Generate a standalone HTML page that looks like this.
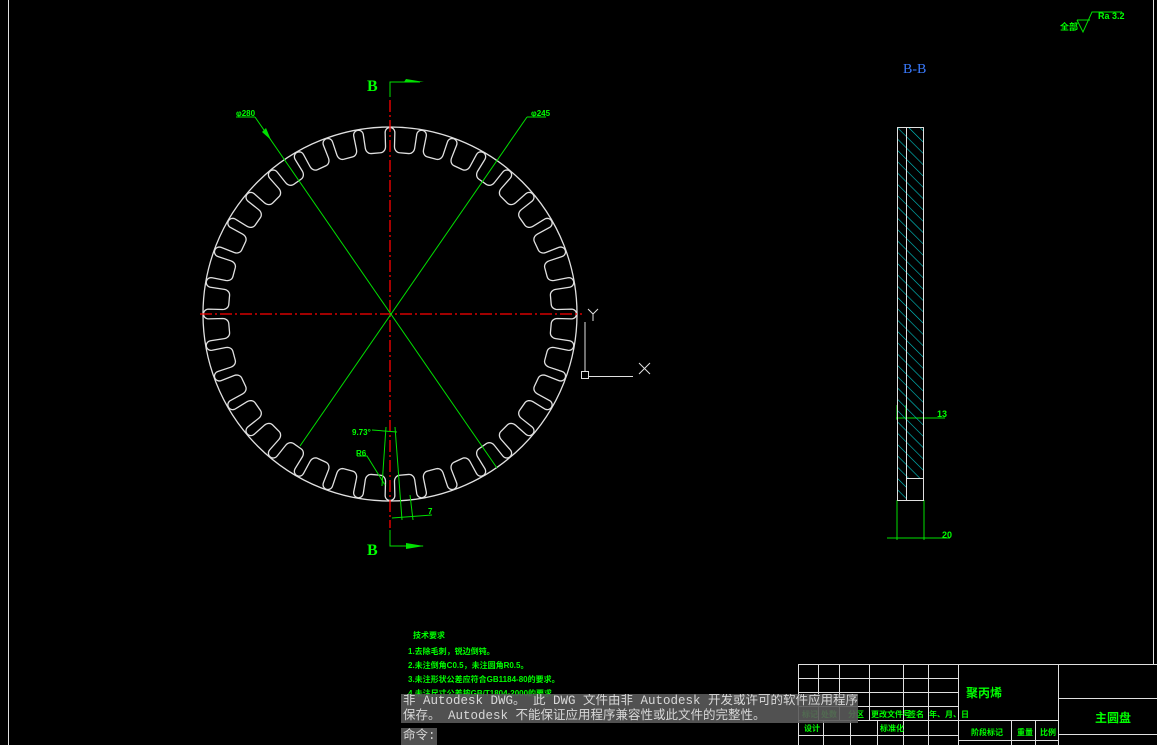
<!DOCTYPE html>
<html><head><meta charset="utf-8"><style>
html,body{margin:0;padding:0;background:#000;width:1157px;height:745px;overflow:hidden}
svg{position:absolute;left:0;top:0}
.g{fill:#00ff00;font-family:"Liberation Sans","Noto Sans CJK SC",sans-serif;font-weight:bold}
.ov{position:absolute;background:rgba(90,90,90,0.9);color:#d8d8d8;font-family:"Liberation Mono","Noto Sans CJK SC",monospace;font-size:12.5px;line-height:14.5px;white-space:nowrap;overflow:hidden}
</style></head><body>
<svg width="1157" height="745" viewBox="0 0 1157 745">
<g stroke="#e0e0e0" stroke-width="1" fill="none">
<line x1="8.5" y1="0" x2="8.5" y2="745"/>
<line x1="1153.5" y1="0" x2="1153.5" y2="664"/>
<circle cx="390" cy="314" r="187" stroke-width="1.3"/>
<path id="gear" stroke-width="1.3"/>
</g>
<g stroke="#ff0000" stroke-width="1.3" stroke-dasharray="12,3,2,3">
<line x1="200" y1="314" x2="582" y2="314"/>
<line x1="390" y1="100" x2="390" y2="528"/>
</g>
<g stroke="#00e000" stroke-width="1" fill="none">
<line x1="236" y1="117" x2="255" y2="117"/><line x1="255" y1="117" x2="497" y2="468"/>
<line x1="527" y1="117" x2="546" y2="117"/><line x1="527" y1="117" x2="300" y2="446"/>
<polyline points="390,97 390,82 420,82"/>
<polyline points="390,530 390,546 423,546"/>
<line x1="372" y1="430" x2="397" y2="432"/>
<line x1="386" y1="427" x2="382" y2="486"/>
<line x1="395" y1="427" x2="402" y2="520"/>
<line x1="410" y1="495" x2="413" y2="520"/>
<line x1="392" y1="518" x2="432" y2="515"/>
<polyline points="357,456 367,456 385,485"/>
<line x1="896" y1="418" x2="945" y2="418"/>
<line x1="897" y1="405" x2="897" y2="420"/><line x1="906" y1="405" x2="906" y2="420"/>
<line x1="897" y1="500" x2="897" y2="540"/><line x1="924" y1="500" x2="924" y2="540"/>
<line x1="887" y1="538" x2="950" y2="538"/>
<polyline points="1077,20 1083,32 1092,12 1122,12"/>
<line x1="1077" y1="20" x2="1090" y2="20"/>
</g>
<g fill="#00e000">
<polygon points="404,82 424,82 406,79"/>
<polygon points="406,543 424,546 406,549"/>
<polygon points="266,128 271,140 262,132"/>
</g>
<defs><pattern id="h" patternUnits="userSpaceOnUse" width="8" height="8" patternTransform="rotate(-45)"><line x1="0" y1="0" x2="0" y2="8" stroke="#00c8c8" stroke-width="1.2"/></pattern></defs>
<rect x="897" y="127" width="9" height="373" fill="url(#h)"/>
<rect x="906" y="127" width="18" height="351" fill="url(#h)"/>
<g stroke="#e0e0e0" fill="none" stroke-width="1">
<rect x="897.5" y="127.5" width="26" height="373"/>
<line x1="906.5" y1="127" x2="906.5" y2="500"/>
<line x1="906" y1="478.5" x2="924" y2="478.5"/>
</g>
<g stroke="#e0e0e0" fill="none" stroke-width="1">
<rect x="581.5" y="371.5" width="7" height="7"/>
<line x1="585" y1="322" x2="585" y2="372"/><line x1="588" y1="376.5" x2="633" y2="376.5"/>
<path d="M588 309 L593 314 L598 309 M593 314 L593 321"/>
<path d="M639 363 L650 374 M650 363 L639 374"/>
</g>
<g stroke="#e0e0e0" stroke-width="1" fill="none">
<path d="M798.5 664 V745 M818.5 664 V720 M839.5 664 V720 M869.5 664 V720 M903.5 664 V745 M928.5 664 V745 M958.5 664 V745 M1058.5 664 V745"/>
<path d="M798 664.5 H1157 M798 678.5 H958 M798 692.5 H958 M798 706.5 H958 M798 720.5 H1058 M798 735.5 H958 M1058 698.5 H1157 M1058 734.5 H1157 M1011.5 720 V745 M1035.5 720 V745 M823.5 720 V745 M850.5 720 V745 M877.5 720 V745 M958 740.5 H1058"/>
</g>
<g class="g">
<text x="367" y="91" font-size="16" font-family="Liberation Serif">B</text>
<text x="367" y="555" font-size="16" font-family="Liberation Serif">B</text>
<text x="236" y="116" font-size="8">φ280</text>
<text x="531" y="116" font-size="8">φ245</text>
<text x="352" y="435" font-size="8">9.73°</text>
<text x="356" y="456" font-size="8">R6</text>
<text x="428" y="514" font-size="8">7</text>
<text x="937" y="417" font-size="9">13</text>
<text x="942" y="538" font-size="9">20</text>
<text x="1060" y="30" font-size="9">全部</text>
<text x="1098" y="19" font-size="9">Ra 3.2</text>
<text x="413" y="638" font-size="8">技术要求</text>
<text x="408" y="654" font-size="8">1.去除毛刺，锐边倒钝。</text>
<text x="408" y="668" font-size="8">2.未注倒角C0.5，未注圆角R0.5。</text>
<text x="408" y="682" font-size="8">3.未注形状公差应符合GB1184-80的要求。</text>
<text x="408" y="696" font-size="8">4.未注尺寸公差按GB/T1804-2000的要求。</text>
<text x="966" y="697" font-size="12">聚丙烯</text>
<text x="1095" y="722" font-size="12">主圆盘</text>
<text x="802" y="717" font-size="8">标记</text><text x="821" y="717" font-size="8">处数</text>
<text x="848" y="717" font-size="8">分区</text><text x="871" y="717" font-size="8">更改文件号</text>
<text x="908" y="717" font-size="8">签名</text><text x="929" y="717" font-size="8">年、月、日</text>
<text x="804" y="731" font-size="8">设计</text><text x="880" y="731" font-size="8">标准化</text>
<text x="971" y="735" font-size="8">阶段标记</text><text x="1017" y="735" font-size="8">重量</text><text x="1040" y="735" font-size="8">比例</text>
</g>
<text x="903" y="73" font-size="14" fill="#3a7bff" font-family="Liberation Serif">B-B</text>
</svg>
<div class="ov" style="left:401px;top:694px;width:455px;height:29px;padding-left:2px">非 Autodesk DWG。 此 DWG 文件由非 Autodesk 开发或许可的软件应用程序<br>保存。 Autodesk 不能保证应用程序兼容性或此文件的完整性。</div>
<div class="ov" style="left:401px;top:728px;width:34px;height:17px;padding-left:2px;line-height:17px">命令:</div>
<script>
(function(){
var cx=390,cy=314,R=187,N=36,P=2*Math.PI*R/N,D=25,rc=5,rb=6;
function arc(pts,c0,c1,r,t0,t1){for(var k=0;k<=6;k++){var t=t0+(t1-t0)*k/6;pts.push([c0+r*Math.cos(t),c1+r*Math.sin(t)]);}}
// local profile: s tangent, h inward
var loc=[];var h2=P/2;
arc(loc,-h2,rc,rc,-Math.PI/2,0);            // cusp right half: from (-h2,0) to (-h2+rc,rc)
loc.push([-h2+rc,D-rb]);
arc(loc,-h2+rc+rb,D-rb,rb,Math.PI,Math.PI/2);
loc.push([h2-rc-rb,D]);
arc(loc,h2-rc-rb,D-rb,rb,Math.PI/2,0);
loc.push([h2-rc,rc]);
arc(loc,h2,rc,rc,Math.PI,3*Math.PI/2);
var p="";
for(var i=0;i<N;i++){
 var a0=-Math.PI/2+i*2*Math.PI/N+Math.PI/N;
 for(var j=0;j<loc.length;j++){
  var s=loc[j][0],h=loc[j][1];
  var ang=a0+s/R,rr=R-0.5-h;
  var x=cx+rr*Math.cos(ang),y=cy+rr*Math.sin(ang);
  p+=(p?" L":"M")+x.toFixed(2)+" "+y.toFixed(2);
 }
}
p+="Z";
document.getElementById("gear").setAttribute("d",p);
})();
</script>
</body></html>
